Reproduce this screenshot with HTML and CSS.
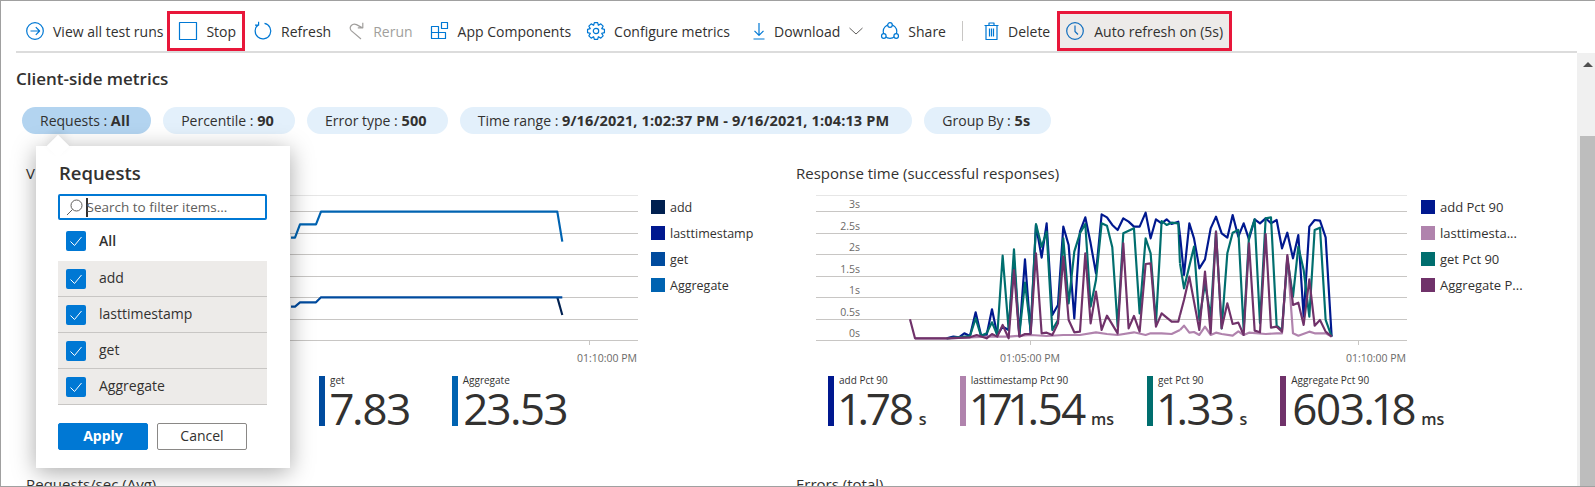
FILE: index.html
```html
<!DOCTYPE html>
<html lang="en">
<head>
    <meta charset="UTF-8">
    <title>Test run - Client-side metrics</title>
    <link rel="stylesheet" href="styles.css">
</head>
<body>
    <div class="window">
        <div class="toolbar">
            <div class="tool view-runs">
                <svg class="icon" viewBox="0 0 18 18"><circle cx="9" cy="9" r="8.3"/><path d="M4.5 9h9M9.800 5.200 13.600 9l-3.800 3.800"/></svg>
                <span>View all test runs</span>
            </div>
            <div class="tool marked stop">
                <svg class="icon" viewBox="0 0 18 18"><rect x="0.5" y="0.5" width="17" height="17"/></svg>
                <span>Stop</span>
            </div>
            <div class="tool">
                <svg class="icon" viewBox="0 0 18 18"><path d="M10.500 1.400A7.800 7.800 0 1 1 4.400 2.700M4.600-.2v3.400H1"/></svg>
                <span>Refresh</span>
            </div>
            <div class="tool disabled">
                <svg class="icon small" viewBox="0 0 15 18"><path d="M12 17 2.200 8.600C-.6 5 3.500 .6 7.500 2.600L13 5.600M13.800 .8v5H8.800"/></svg>
                <span>Rerun</span>
            </div>
            <div class="tool">
                <svg class="icon" viewBox="0 0 18 18"><path d="M.5 4.500h7v6h-7zM7.500 10.500h7v6h-7zM.5 10.500h7v6h-7zM10.500 .5h6v6h-6z"/></svg>
                <span>App Components</span>
            </div>
            <div class="tool configure">
                <svg class="icon" viewBox="0 0 18 18"><path d="M17.440 7.360V10.640L14.730 11.370 16.130 13.810 13.810 16.130 11.370 14.730 10.640 17.440H7.360L6.630 14.730 4.190 16.130 1.870 13.810 3.270 11.370 .56 10.640V7.360L3.270 6.630 1.870 4.190 4.190 1.870 6.630 3.270 7.360 .56H10.640L11.370 3.270 13.810 1.870 16.130 4.190 14.730 6.630Z"/><circle cx="9" cy="9" r="2.700"/></svg>
                <span>Configure metrics</span>
            </div>
            <div class="tool download">
                <svg class="icon narrow" viewBox="0 0 12 18"><path d="M6 1v12M1.500 8.800 6 13.300l4.500-4.500M.5 17h11"/></svg>
                <span>Download</span>
                <svg class="chevron" viewBox="0 0 14 8"><path d="M.5 1 7 7l6.500-6"/></svg>
            </div>
            <div class="tool share">
                <svg class="icon" viewBox="0 0 18 18"><circle cx="9" cy="9.500" r="6.800"/><circle class="node" cx="9" cy="3" r="2.300"/><circle class="node" cx="2.800" cy="14" r="2.300"/><circle class="node" cx="15.200" cy="14" r="2.300"/></svg>
                <span>Share</span>
            </div>
            <div class="tool-sep"></div>
            <div class="tool delete">
                <svg class="icon small" viewBox="0 0 15 18"><path d="M.5 3.500h14M2 3.500h11v14H2zM5 1h5v2.500H5zM5.500 6.500v8M7.500 6.500v8M9.500 6.500v8"/></svg>
                <span>Delete</span>
            </div>
            <div class="tool marked active">
                <svg class="icon clock" viewBox="0 0 18 18"><circle cx="9" cy="9" r="8.300"/><path d="M9 3.500V9.500l3 3"/></svg>
                <span>Auto refresh on (5s)</span>
            </div>
        </div>

        <div class="body-row">
            <div class="content">
                <h2 class="section-title">Client-side metrics</h2>
                <div class="chips">
                    <div class="chip open">Requests : <b>All</b></div>
                    <div class="chip">Percentile : <b>90</b></div>
                    <div class="chip">Error type : <b>500</b></div>
                    <div class="chip time">Time range : <b>9/16/2021, 1:02:37 PM - 9/16/2021, 1:04:13 PM</b></div>
                    <div class="chip">Group By : <b>5s</b></div>
                </div>

                <div class="panels">
                    <div class="panel">
                        <div class="panel-title">V</div>
                        <div class="chart-row">
                            <svg class="chart" viewBox="26 190 612 176">
                                <g class="grid">
                                    <path d="M46 195.500H638"/>
                                    <path d="M46 211.500H638M46 233.500H638M46 254.500H638M46 276.500H638M46 297.500H638M46 319.500H638M46 340.500H638"/>
                                    <path class="tick" d="M589.500 341v4"/>
                                </g>
                                <g class="series" transform="translate(280 180) scale(.3333)">
                                    <polyline stroke="#0063b1" points="33,173 45,173 60,133 108,133 123,95 832,95 847,185"/>
                                    <polyline stroke="#002050" points="832,352 847,405"/>
                                    <polyline stroke="#004b9e" points="33,380 45,380 60,367 108,367 123,352 847,352"/>
                                </g>
                                <text class="axis" x="637" y="362" text-anchor="end">01:10:00 PM</text>
                            </svg>
                            <div class="legend">
                                <div class="legend-item"><i class="c-navy"></i>add</div>
                                <div class="legend-item"><i class="c-indigo"></i>lasttimestamp</div>
                                <div class="legend-item"><i class="c-blue"></i>get</div>
                                <div class="legend-item"><i class="c-sky"></i>Aggregate</div>
                            </div>
                        </div>
                        <div class="stats stats-left">
                            <div class="stat c-blue"><div class="stat-label">get</div><div class="stat-value">7.83</div></div>
                            <div class="stat c-sky"><div class="stat-label">Aggregate</div><div class="stat-value">23.53</div></div>
                        </div>
                        <div class="panel-title next">Requests/sec (Avg)</div>
                    </div>

                    <div class="panel">
                        <div class="panel-title">Response time (successful responses)</div>
                        <div class="chart-row">
                            <svg class="chart" viewBox="796 190 612 176">
                                <g class="grid">
                                    <path d="M816 195.500H1407"/>
                                    <path d="M816 211.500H1407M816 233.500H1407M816 254.500H1407M816 276.500H1407M816 297.500H1407M816 319.500H1407M816 340.500H1407"/>
                                    <path class="tick" d="M1030.500 341v4M1358.500 341v4"/>
                                </g>
                                <g class="series" transform="translate(780 160) scale(.3333)">
                                    <polyline stroke="#00188f" points="500,535 520,530 537,532 553,520 570,528 587,457 603,525 620,525 636,448 652,525 668,500 686,510 702,300 718,525 735,298 752,520 768,195 785,293 800,190 817,465 834,435 850,200 866,255 883,475 900,215 916,172 932,250 948,340 965,163 981,172 997,195 1013,210 1030,175 1046,185 1062,200 1079,200 1097,158 1112,235 1128,178 1145,190 1160,178 1175,192 1195,185 1200,225"/>
                                    <polyline stroke="#b083ad" points="405,535 500,535 570,532 620,530 686,530 752,525 800,528 850,525 900,525 948,517 981,522 1013,525 1062,517 1097,525 1112,520 1145,520 1175,522 1200,510"/>
                                    <polyline stroke="#006e6e" points="500,535 570,528 587,475 603,527 620,520 636,487 652,525 668,287 686,510 702,268 718,525 735,368 752,510 768,192 785,260 800,215 817,510 834,480 850,235 866,430 883,275 900,220 916,192 932,440 948,360 965,190 981,197 997,262 1013,500 1030,220 1062,205 1079,460 1097,235 1112,280 1128,490 1145,183 1160,195 1175,188 1195,190 1200,310"/>
                                    <polyline stroke="#70326a" points="390,478 405,535 500,535 570,532 590,525 620,535 636,522 652,530 668,495 686,535 702,330 718,530 735,522 752,522 768,280 785,520 800,518 817,525 834,490 850,290 866,480 883,517 900,515 916,280 932,490 948,395 965,510 981,467 1013,520 1030,250 1046,505 1062,468 1079,515 1097,312 1112,310 1128,500 1145,460 1175,485 1195,485 1200,465"/>
                                </g>
                                <g class="series" transform="translate(1180 160) scale(.3333)">
                                    <polyline stroke="#00188f" points="0,225 12,345 28,190 42,235 58,325 75,298 92,205 108,170 125,220 142,233 158,165 175,230 191,190 207,238 224,178 240,190 257,175 273,190 290,180 306,265 322,218 339,295 355,225 371,470 388,200 404,180 420,182 437,232 455,530"/>
                                    <polyline stroke="#b083ad" points="0,510 12,497 28,518 42,516 58,525 75,500 92,525 108,518 125,522 158,527 175,514 191,525 207,518 257,522 290,520 306,520 322,290 339,520 355,527 388,515 404,520 437,520 455,530"/>
                                    <polyline stroke="#006e6e" points="0,310 12,385 42,260 58,480 75,370 92,470 108,215 125,505 142,280 158,218 175,210 191,510 207,230 224,178 240,490 257,175 273,172 290,497 306,510 322,295 339,410 355,260 371,330 388,470 404,210 420,203 437,480 455,530"/>
                                    <polyline stroke="#70326a" points="0,465 12,420 28,350 58,510 75,335 92,520 108,215 125,505 142,430 158,492 175,488 191,525 207,250 224,512 240,517 257,222 273,503 290,500 306,515 322,285 339,435 355,428 371,495 388,358 404,497 420,480 437,515 455,530"/>
                                </g>
                                <text class="axis" x="860" y="208" text-anchor="end">3s</text>
                                <text class="axis" x="860" y="230" text-anchor="end">2.5s</text>
                                <text class="axis" x="860" y="251" text-anchor="end">2s</text>
                                <text class="axis" x="860" y="273" text-anchor="end">1.5s</text>
                                <text class="axis" x="860" y="294" text-anchor="end">1s</text>
                                <text class="axis" x="860" y="316" text-anchor="end">0.5s</text>
                                <text class="axis" x="860" y="337" text-anchor="end">0s</text>
                                <text class="axis" x="1030" y="362" text-anchor="middle">01:05:00 PM</text>
                                <text class="axis" x="1406" y="362" text-anchor="end">01:10:00 PM</text>
                            </svg>
                            <div class="legend legend-right">
                                <div class="legend-item"><i class="c-indigo"></i>add Pct 90</div>
                                <div class="legend-item"><i class="c-mauve"></i>lasttimesta...</div>
                                <div class="legend-item"><i class="c-teal"></i>get Pct 90</div>
                                <div class="legend-item"><i class="c-plum"></i>Aggregate P...</div>
                            </div>
                        </div>
                        <div class="stats stats-right">
                            <div class="stat c-indigo"><div class="stat-label">add Pct 90</div><div class="stat-value">1.78<small>s</small></div></div>
                            <div class="stat c-mauve"><div class="stat-label">lasttimestamp Pct 90</div><div class="stat-value">171.54<small>ms</small></div></div>
                            <div class="stat c-teal"><div class="stat-label">get Pct 90</div><div class="stat-value">1.33<small>s</small></div></div>
                            <div class="stat c-plum"><div class="stat-label">Aggregate Pct 90</div><div class="stat-value">603.18<small>ms</small></div></div>
                        </div>
                        <div class="panel-title next">Errors (total)</div>
                    </div>
                </div>
            </div>

            <div class="scrollbar">
                <div class="scroll-up"></div>
                <div class="scroll-thumb"></div>
            </div>
        </div>

        <div class="popover">
            <div class="beak"></div>
            <div class="popover-title">Requests</div>
            <div class="search">
                <svg class="search-icon" viewBox="0 0 17 17"><circle cx="10.500" cy="6.500" r="5.500"/><path d="M6.500 10.500 1 16"/></svg>
                <span class="caret"></span>
                <span class="placeholder">Search to filter items...</span>
            </div>
            <div class="check-row all">
                <span class="check"><svg viewBox="0 0 20 20"><path d="M4.500 10.500 8.500 14.500 15.500 6"/></svg></span>All
            </div>
            <div class="check-row">
                <span class="check"><svg viewBox="0 0 20 20"><path d="M4.500 10.500 8.500 14.500 15.500 6"/></svg></span>add
            </div>
            <div class="check-row">
                <span class="check"><svg viewBox="0 0 20 20"><path d="M4.500 10.500 8.500 14.500 15.500 6"/></svg></span>lasttimestamp
            </div>
            <div class="check-row">
                <span class="check"><svg viewBox="0 0 20 20"><path d="M4.500 10.500 8.500 14.500 15.500 6"/></svg></span>get
            </div>
            <div class="check-row">
                <span class="check"><svg viewBox="0 0 20 20"><path d="M4.500 10.500 8.500 14.500 15.500 6"/></svg></span>Aggregate
            </div>
            <div class="popover-actions">
                <button class="btn primary">Apply</button>
                <button class="btn">Cancel</button>
            </div>
        </div>
    </div>
</body>
</html>
```

FILE: styles.css
```css
/* Page frame */
body {
    margin: 0;
    font-family: "Open Sans", "Noto Sans", sans-serif;
    font-size: 14px;
    color: #323130;
    background-color: #fff;
}

.window {
    position: relative;
    box-sizing: border-box;
    height: 487px;
    display: flex;
    flex-direction: column;
    overflow: hidden;
    border-top: 1px solid #a0a0a0;
    border-bottom: 1px solid #a0a0a0;
    border-left: 1px solid #a0a0a0;
}

/* Toolbar */
.toolbar {
    display: flex;
    align-items: center;
    height: 40px;
    margin: 10px 18px 0 15px;
    padding-left: 1px;
    border-bottom: 2px solid #dcdcdc;
    flex-shrink: 0;
}

.tool {
    display: flex;
    align-items: center;
    gap: 9px;
    height: 40px;
    padding: 0 9px;
    white-space: nowrap;
}

.tool.view-runs {
    padding-right: 4px;
}

.tool.disabled {
    color: #a19f9d;
}

.tool.marked {
    box-sizing: border-box;
    border: 3px solid #e8173a;
    padding: 0 6px;
}

.tool.stop {
    padding-left: 9px;
}

.tool.active {
    gap: 10px;
    background-color: #edebe9;
}

.tool.configure {
    margin-left: -2px;
}

.tool.download {
    margin-left: 5px;
}

.tool.share {
    margin-right: -3px;
}

.tool.delete {
    margin: 0 -2px 0 2px;
}

.tool-sep {
    width: 1px;
    height: 20px;
    margin: 0 10px;
    background-color: #c8c6c4;
}

.icon {
    width: 18px;
    height: 18px;
    fill: none;
    stroke: #0078d4;
    stroke-width: 1.200;
    stroke-linejoin: round;
    overflow: visible;
    flex-shrink: 0;
}

.icon.small {
    width: 15px;
}

.icon.narrow {
    width: 12px;
}

.icon.clock {
    stroke: #106ebe;
}

.icon .node {
    fill: #fff;
}

.disabled .icon {
    stroke: #a19f9d;
}

.chevron {
    width: 14px;
    height: 8px;
    fill: none;
    stroke: #605e5c;
}

/* Main area */
.body-row {
    flex: 1;
    display: flex;
    min-height: 0;
}

.content {
    flex: 1;
    min-width: 0;
    padding: 15px 0 0 15px;
}

.section-title {
    margin: 0;
    font-size: 17px;
    font-weight: 600;
    line-height: 22px;
}

.chips {
    display: flex;
    gap: 12px;
    margin: 17px 0 0 6px;
}

.chip {
    height: 27px;
    line-height: 27px;
    padding: 0 21px 0 18px;
    border-radius: 14px;
    background-color: #e3f0fb;
    white-space: nowrap;
}

.chip.open {
    background-color: #b3d4f0;
}

.chip.time {
    padding-right: 23px;
}

.chip b {
    font-size: 14.500px;
    font-weight: 700;
    letter-spacing: .15px;
}

.panels {
    display: grid;
    grid-template-columns: 770px 1fr;
    margin: 29px 0 0 10px;
}

.panel-title {
    height: 20px;
    line-height: 20px;
    font-size: 15px;
    white-space: nowrap;
}

.panel-title.next {
    margin-top: 48px;
}

.chart-row {
    display: flex;
    margin-top: 7px;
}

.chart {
    width: 612px;
    height: 176px;
    flex-shrink: 0;
}

.grid path {
    stroke: #c8c6c4;
    stroke-width: 1;
    fill: none;
}

.grid path:first-child {
    stroke: #e6e6e6;
}

.series polyline {
    fill: none;
    stroke-width: 6.500;
    stroke-linejoin: round;
}

.axis {
    font-family: "Open Sans", sans-serif;
    font-size: 10.500px;
    fill: #6b6967;
}

.legend {
    margin: 7px 0 0 13px;
    display: flex;
    flex-direction: column;
    gap: 6px;
    font-size: 12.500px;
}

.legend-right {
    font-size: 13px;
}

.legend-item {
    display: flex;
    align-items: center;
    gap: 5px;
    height: 20px;
    white-space: nowrap;
}

.legend-item i {
    width: 14px;
    height: 14px;
}

/* series colours, used by legend swatches and stat bars */
.c-navy { background-color: #002050; }
.c-indigo { background-color: #00188f; }
.c-blue { background-color: #004b9e; }
.c-sky { background-color: #0063b1; }
.c-mauve { background-color: #b083ad; }
.c-teal { background-color: #006e6e; }
.c-plum { background-color: #70326a; }

.stat.c-indigo { border-color: #00188f; background: none; }
.stat.c-blue { border-color: #004b9e; background: none; }
.stat.c-sky { border-color: #0063b1; background: none; }
.stat.c-mauve { border-color: #b083ad; background: none; }
.stat.c-teal { border-color: #006e6e; background: none; }
.stat.c-plum { border-color: #70326a; background: none; }

.stats {
    display: flex;
    margin-top: 10px;
}

.stats-left {
    padding-left: 293px;
    gap: 42px;
}

.stats-right {
    padding-left: 32px;
    gap: 33px;
}

.stat {
    height: 50px;
    padding-left: 6px;
    border-left: 6px solid #000;
    white-space: nowrap;
}

.stat-label {
    margin: -2px 0 2px -1px;
    font-size: 10px;
    line-height: 13px;
}

.stat-value {
    font-size: 44px;
    line-height: 38px;
    letter-spacing: -1.500px;
    font-variant-numeric: proportional-nums;
}

.stat-value small {
    font-size: 16px;
    font-weight: 600;
    letter-spacing: 0;
    margin-left: 6px;
}

/* Scrollbar */
.scrollbar {
    width: 18px;
    flex-shrink: 0;
    background-color: #f0f0f0;
}

.scroll-up {
    width: 0;
    height: 0;
    margin: 9px 0 0 6px;
    border-left: 5px solid transparent;
    border-right: 5px solid transparent;
    border-bottom: 5px solid #505050;
}

.scroll-thumb {
    height: 360px;
    margin: 69px 0 0 3px;
    background-color: #bdbdbd;
}

/* Requests filter popover */
.popover {
    position: absolute;
    left: 35px;
    top: 145px;
    box-sizing: border-box;
    width: 254px;
    height: 322px;
    padding: 15px 23px 0 22px;
    background-color: #fff;
    box-shadow: 0 4px 22px rgba(0, 0, 0, 0.34);
}

.beak {
    position: absolute;
    left: 14px;
    top: -8px;
    width: 16px;
    height: 16px;
    background-color: #fff;
    transform: rotate(45deg);
    box-shadow: -4px -4px 8px rgba(0, 0, 0, 0.08);
}

.popover-title {
    position: relative;
    padding-left: 1px;
    font-size: 18.500px;
    font-weight: 600;
    line-height: 24px;
}

.search {
    display: flex;
    align-items: center;
    box-sizing: border-box;
    height: 26px;
    margin-top: 9px;
    padding-left: 6px;
    border: 2px solid #0078d4;
    border-radius: 2px;
    font-size: 13.500px;
}

.search-icon {
    width: 17px;
    height: 17px;
    fill: none;
    stroke: #605e5c;
    flex-shrink: 0;
}

.caret {
    width: 1.500px;
    height: 19px;
    margin-left: 3px;
    background-color: #323130;
}

.placeholder {
    margin-left: -1px;
    color: #605e5c;
    white-space: nowrap;
}

.check-row {
    display: flex;
    align-items: center;
    gap: 13px;
    box-sizing: border-box;
    height: 36px;
    padding: 0 0 2px 8px;
    background-color: #edebe9;
    border-bottom: 1px solid #c8c6c4;
}

.check-row.all {
    height: 41px;
    padding-bottom: 0;
    background-color: #fff;
    border-bottom: 0;
    font-weight: 600;
}

.check {
    width: 20px;
    height: 20px;
    margin-top: 2px;
    border-radius: 2px;
    background-color: #0078d4;
}

.all .check {
    margin-top: 0;
}

.check svg {
    display: block;
    fill: none;
    stroke: #fff;
}

.popover-actions {
    display: flex;
    gap: 9px;
    margin-top: 18px;
}

.btn {
    width: 90px;
    height: 27px;
    padding: 0 0 2px;
    font-family: inherit;
    font-size: 14px;
    color: #323130;
    background-color: #fff;
    border: 1px solid #8a8886;
    border-radius: 2px;
}

.btn.primary {
    color: #fff;
    font-weight: 700;
    background-color: #0078d4;
    border-color: #0078d4;
}
```
